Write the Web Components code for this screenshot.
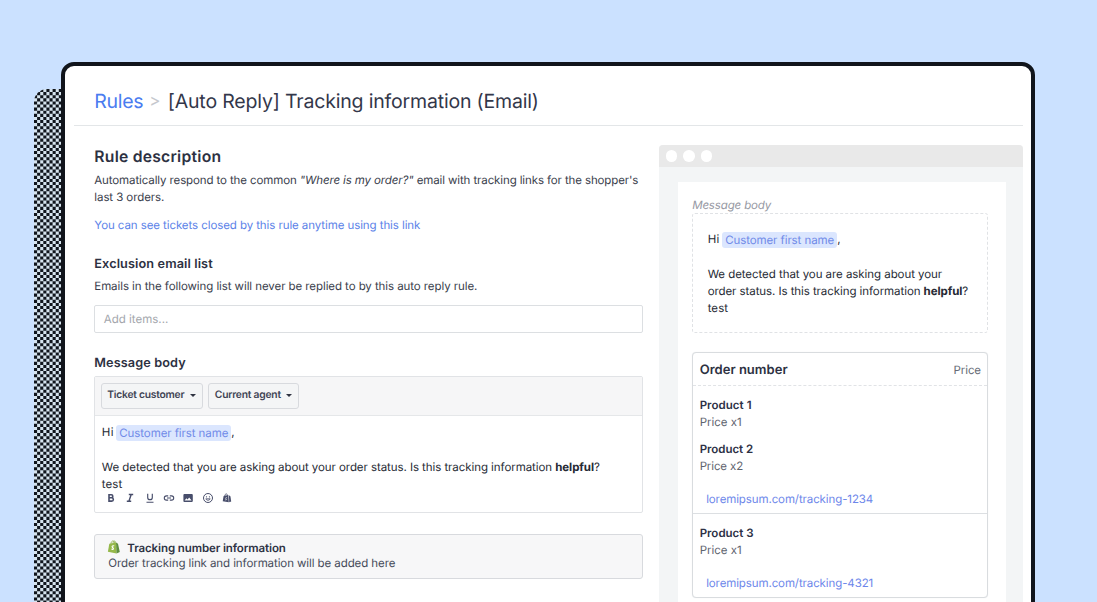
<!DOCTYPE html>
<html lang="en">
<head>
<meta charset="utf-8">
<title>Rules</title>
<style>
html,body{margin:0;height:602px;overflow:hidden;background:#cbe1ff;font-family:Inter,"Liberation Sans",sans-serif;color:#393d4b}
</style>
</head>
<body>
<app-window>
  <page-heading slot="heading"></page-heading>
  <rule-form slot="form"></rule-form>
  <email-preview slot="preview"></email-preview>
</app-window>
<script>
const define = (name, html, after) => {
  const t = document.createElement('template');
  t.innerHTML = html;
  customElements.define(name, class extends HTMLElement {
    constructor(){ super(); this.attachShadow({mode:'open'}).append(t.content.cloneNode(true)); }
    connectedCallback(){ if (after) after(this); }
  });
};

/* One line of text; tracking is adjusted so the line spans its w attribute. */
define('text-line', `<style>
:host{display:block;flex:none;white-space:nowrap;font-size:11.5px;line-height:17px;text-rendering:geometricPrecision}
span{display:inline-block}
</style><span><slot></slot></span>`, el => {
  const s = el.shadowRoot.querySelector('span');
  const w = +el.getAttribute('w'), n = el.textContent.length;
  if (w) s.style.letterSpacing = ((w - s.getBoundingClientRect().width) / n).toFixed(4) + 'px';
});

define('variable-tag', `<style>
:host{display:block;flex:none;box-sizing:border-box;height:16px;padding:0 3px;border-radius:3px;background:#dbe6fe;color:#708ae8}
text-line{line-height:16px}
</style><text-line w="109">Customer first name</text-line>`);

define('greeting-line', `<style>
:host{display:flex;height:17px;color:#262a34}
variable-tag{margin:1px 0 0 2.5px}
</style><text-line w="12">Hi</text-line><variable-tag></variable-tag><text-line>,</text-line>`);

define('page-heading', `<style>
:host{display:flex;box-sizing:border-box;height:60px;padding:23px 0 0 20px;border-bottom:1.5px solid #e3e6e8}
text-line{font-size:19.5px;line-height:24px}
.a{color:#4a7cf0;width:55px}.b{color:#c5c8cd;width:18.5px;font-size:17px}.c{color:#33374a}
</style><text-line class="a" w="49">Rules</text-line><text-line class="b" w="11">&gt;</text-line><text-line class="c" w="371">[Auto Reply] Tracking information (Email)</text-line>`);

define('drop-button', `<style>
:host{display:flex;box-sizing:border-box;align-items:center;justify-content:space-between;height:26px;padding:0 6px 0 5.5px;border:1px solid #d8dade;border-radius:3px;background:#f4f5f6;color:#3f4454;font-weight:600}
::slotted(text-line){font-size:10.3px}
i{border:3px solid transparent;border-top:3.5px solid #2f3341;border-bottom:0}
</style><slot></slot><i></i>`);

define('format-bar', `<style>
:host{display:flex;gap:7.4px;padding-left:3px;height:12px;color:#484e6b}
svg{display:block;width:12px;height:12px;fill:none;stroke:currentColor;stroke-width:1.1}
.f{fill:currentColor;stroke:none}
</style>
<svg viewBox="0 0 12 12"><path d="M4 2.8h2.3a1.5 1.5 0 0 1 0 3H4zM4 5.8h2.7a1.65 1.65 0 0 1 0 3.3H4z" stroke-width="1.6"/></svg>
<svg viewBox="0 0 12 12"><path d="M4.8 2.5h4.4M2.8 9.3h4.4M7.2 2.5 4.9 9.3" stroke-width="1.4"/></svg>
<svg viewBox="0 0 12 12"><path d="M3.7 1.8v3.6a2.3 2.3 0 0 0 4.6 0V1.8M2.5 10.2h7" stroke-width="1.15"/></svg>
<svg viewBox="0 0 12 12"><path d="M5.2 3.9H3.4a2.1 2.1 0 0 0 0 4.2h1.8M6.8 3.9h1.8a2.1 2.1 0 0 1 0 4.2H6.8M4 6h4"/></svg>
<svg viewBox="0 0 12 12"><path class="f" fill-rule="evenodd" d="M2.3 2h7.600c.5 0 .9.4.9.9v6.200c0 .5-.4.9-.9.9H2.300a.9.9 0 0 1-.9-.9V2.900c0-.5.4-.9.9-.9zM2.600 8.600h7L7.200 5.500 5.500 7.600 4.400 6.300z"/></svg>
<svg viewBox="0 0 12 12"><circle cx="6" cy="6" r="4.500" stroke-width="1"/><path d="M3.800 6.800c.8 2 3.600 2 4.400 0z" stroke-width=".8"/><circle class="f" cx="4.500" cy="4.800" r=".65"/><circle class="f" cx="7.500" cy="4.800" r=".65"/></svg>
<svg viewBox="0 0 12 12"><path class="f" d="M2.600 4 7.300 2.900 7.800 10.300 1.700 9.300z"/><path class="f" d="M7.900 3.300l1.500.9.8 5.400-2 .7z"/><path d="M3.800 4.100c.1-2.700 2.500-3 2.800-.4" stroke-width=".8"/><path d="M6 5.700c-1.300-.6-2 .5-1 1.100s.5 1.500-.9 1" stroke="#fff" stroke-width=".6"/></svg>`);

define('shop-bag', `<style>:host{display:block;width:14px;height:14px}svg{display:block}</style>
<svg width="14" height="14" viewBox="0 0 14 14"><path d="M2.300 3.800 9 2.500 9.500 13.400.9 11.700z" fill="#95b84a"/><path d="M9 2.500l2 1.200L12.800 12l-3.300 1.400z" fill="#5e8e3e"/><path d="M3.900 3.900C4.200.3 7.200-.1 7.700 3.200M6 3.200C6.400.7 8.300.2 8.700 2.700" fill="none" stroke="#86a944" stroke-width=".8"/><path d="M7.200 6c-1.500-.6-2.500.2-2 1.100.4.700 1.400.9 1.200 1.700-.2.800-1.200.6-2 .1" fill="none" stroke="#fff" stroke-width="1.100"/></svg>`);

define('message-editor', `<style>
:host{display:flex;flex-direction:column;box-sizing:border-box;height:137.500px;border:1px solid #e1e3e6;border-radius:2px;background:#fff}
.bar{display:flex;gap:5px;box-sizing:border-box;height:39px;padding:6px 5.500px;background:#f6f6f7;border-bottom:1px solid #e5e7e9}
.body{padding:8px 6.500px;color:#262a34}
.p{margin-top:18.300px}
</style>
<div class="bar"><drop-button style="width:102.500px"><text-line w="77">Ticket customer</text-line></drop-button><drop-button style="width:90.500px"><text-line w="66">Current agent</text-line></drop-button></div>
<div class="body"><greeting-line></greeting-line>
<text-line class="p" w="498">We detected that you are asking about your order status. Is this tracking information <b>helpful</b>?</text-line>
<text-line w="20.500">test</text-line>
<format-bar style="margin-top:-.5px"></format-bar></div>`);

define('tracking-note', `<style>
:host{display:block;box-sizing:border-box;height:45px;padding:5px 13px;border:1px solid #d8dade;border-radius:3px;background:#f7f7f8}
.h{display:flex;gap:6px;height:16px}
.h text-line{font-weight:600;color:#2d3244;line-height:16px}
.s{line-height:15.500px;color:#454a59}
shop-bag{margin:0 0 0 -1px}
</style><div class="h"><shop-bag></shop-bag><text-line w="158.500">Tracking number information</text-line></div><text-line class="s" w="287">Order tracking link and information will be added here</text-line>`);

define('rule-form', `<style>
:host{display:block;width:549px;padding:20.500px 0 0 20px}
.h1{font-size:15.700px;font-weight:600;line-height:22px;color:#2d3142;margin-bottom:4px}
.h2{font-size:12.700px;font-weight:600;line-height:18px;color:#2d3142}
.link{color:#5b82e8;margin:11px 0 21.500px}
.field{box-sizing:border-box;height:27.500px;margin:10.500px 0 22px;padding:4.500px 8.500px;border:1px solid #dcdfe2;border-radius:2px;color:#a3a6ac}
message-editor{margin:3px 0 21px}
</style>
<text-line class="h1" w="127">Rule description</text-line>
<text-line w="544">Automatically respond to the common <i>"Where is my order?"</i> email with tracking links for the shopper's</text-line>
<text-line w="70">last 3 orders.</text-line>
<text-line class="link" w="326">You can see tickets closed by this rule anytime using this link</text-line>
<text-line class="h2" w="118.500" style="margin-bottom:4px">Exclusion email list</text-line>
<text-line w="383">Emails in the following list will never be replied to by this auto reply rule.</text-line>
<div class="field"><text-line w="64.500">Add items...</text-line></div>
<text-line class="h2" w="91.500">Message body</text-line>
<message-editor></message-editor>
<tracking-note></tracking-note>`);

define('order-product', `<style>
:host{display:block}
::slotted([slot=name]){font-weight:600;color:#2d3146}
::slotted([slot=qty]){color:#5e636e}
</style><slot name="name"></slot><slot name="qty"></slot>`);

define('order-card', `<style>
:host{display:block;box-sizing:border-box;height:246px;border:1px solid #d9dcdf;border-radius:4px;background:#fff;box-shadow:0 0 1px #e3e5e8}
header{display:flex;box-sizing:border-box;justify-content:space-between;height:33px;padding:7px 6px 0 6.500px;border-bottom:1px dashed #e1e3e6}
.t{font-size:13px;font-weight:600;line-height:21px;color:#2d3142}
.r{line-height:21px;color:#666b75}
section{box-sizing:border-box;padding:10.500px 6.500px 0}
.one{height:128px;border-bottom:1px solid #dcdfe2}
.link{color:#6c86ea;margin:16px 0 0 6.500px}
</style>
<header><text-line class="t" w="88">Order number</text-line><text-line class="r" w="27.500">Price</text-line></header>
<section class="one"><order-product><text-line slot="name" w="52">Product 1</text-line><text-line slot="qty" w="42">Price x1</text-line></order-product>
<order-product style="margin-top:10px"><text-line slot="name" w="53.500">Product 2</text-line><text-line slot="qty" w="43.500">Price x2</text-line></order-product>
<text-line class="link" w="167">loremipsum.com/tracking-1234</text-line></section>
<section><order-product><text-line slot="name" w="54">Product 3</text-line><text-line slot="qty" w="42">Price x1</text-line></order-product>
<text-line class="link" w="167">loremipsum.com/tracking-4321</text-line></section>`);

define('email-preview', `<style>
:host{display:block;box-sizing:border-box;width:364px;height:480px;margin-top:19.500px;background:#f3f5f6;border-radius:4px 4px 0 0;overflow:hidden}
.top{display:flex;align-items:center;gap:6px;height:22px;padding-left:6.500px;background:#e9e9e9}
.top i{width:11.500px;height:11.500px;border-radius:50%;background:#fff}
.page{box-sizing:border-box;height:460px;margin:14.500px 17px 0 18.500px;padding:15px 18px 0 14.500px;background:#fff}
.lab{font-style:italic;color:#9699a3;line-height:16px}
.msg{box-sizing:border-box;height:120px;padding:17px 14.500px;border:1px dashed #e0e2e5;border-radius:3px;color:#262a34;margin-bottom:19.500px}
.p{margin-top:18.500px}
</style>
<div class="top"><i></i><i></i><i></i></div>
<div class="page"><text-line class="lab" w="79">Message body</text-line>
<div class="msg"><greeting-line></greeting-line><text-line class="p" w="234.500">We detected that you are asking about your</text-line><text-line w="260.500">order status. Is this tracking information <b>helpful</b>?</text-line><text-line w="20.500">test</text-line></div>
<order-card></order-card></div>`);

/* Checkered drop shadow: every second cell of a grid is filled. */
define('checker-shade', `<style>
:host{display:block;background:#d6e4ef;border-radius:13px 0 0 0;overflow:hidden}
svg{display:block}path{fill:#10151d}
</style><svg width="60" height="540"><path/></svg>`, el => {
  const c = 3.1; let d = '';
  for (let r = 0; r < 170; r++) for (let k = r % 2; k < 20; k += 2)
    d += `M${(k * c).toFixed(1)} ${(r * c).toFixed(1)}h${c}v${c}h-${c}z`;
  el.shadowRoot.querySelector('path').setAttribute('d', d);
});

define('app-window', `<style>
:host{display:flow-root;position:relative;width:1097px;height:602px;overflow:hidden;background:#cbe1ff}
checker-shade{position:absolute;left:34px;top:89px;width:60px;height:540px}
.win{position:relative;box-sizing:border-box;width:974px;height:600px;margin:61.500px 0 0 61px;border:4px solid #11151c;border-radius:13px;background:#fff;overflow:hidden;padding:0 8px 0 9.300px}
.cols{display:flex;gap:16px}
</style><checker-shade></checker-shade><div class="win"><slot name="heading"></slot><div class="cols"><slot name="form"></slot><slot name="preview"></slot></div></div>`);
</script>
</body>
</html>
